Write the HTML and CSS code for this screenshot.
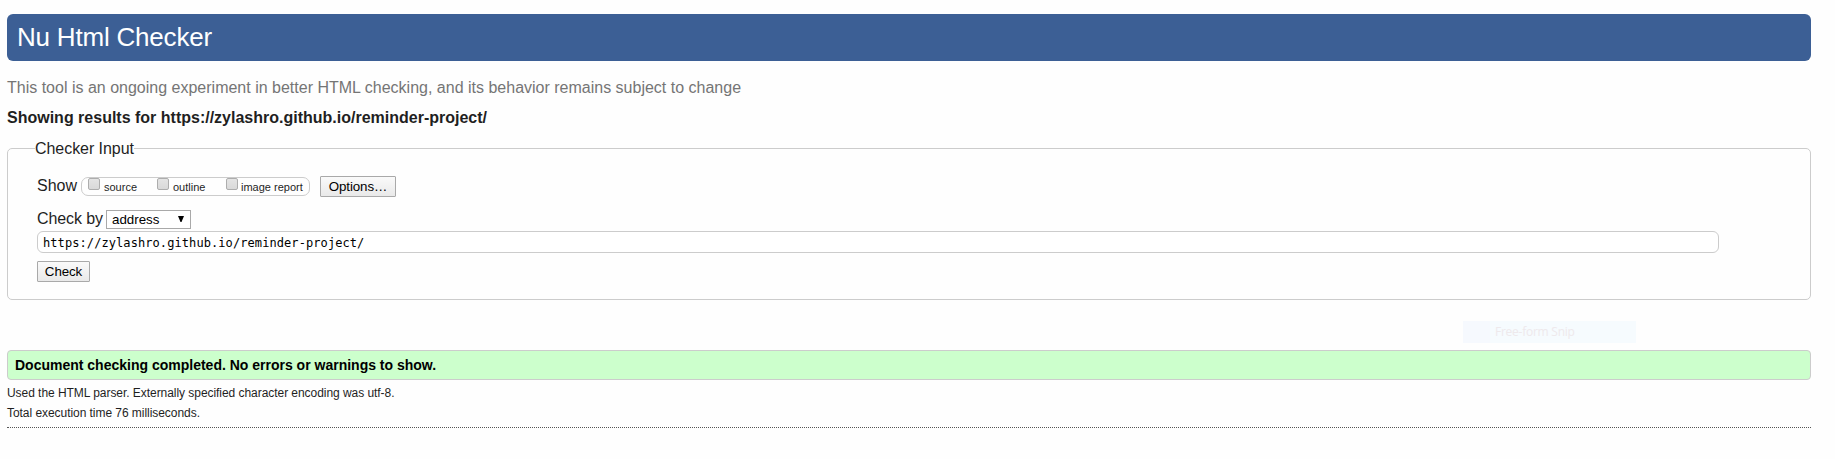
FILE: index.html
```html
<!DOCTYPE html>
<html lang="en">
<head>
<meta charset="utf-8">
<title>Nu Html Checker</title>
<link rel="stylesheet" href="styles.css">
</head>
<body>
<header class="banner"><h1 class="title"><span>Nu Html Checker</span></h1></header>
<p class="intro"><span>This tool is an ongoing experiment in better HTML checking, and its behavior remains subject to change</span></p>
<h2 class="showing"><span>Showing results for https://zylashro.github.io/reminder-project/</span></h2>
<form>
<fieldset class="panel">
<legend class="legend">Checker Input</legend>
<div class="show-row">
<span class="label">Show</span>
<span class="checks">
<label class="check"><input type="checkbox" class="box"><span>source</span></label>
<label class="check"><input type="checkbox" class="box"><span>outline</span></label>
<label class="check"><input type="checkbox" class="box"><span class="report">image report</span></label>
</span>
<button type="button" class="button options">Options…</button>
</div>
<div class="by-row">
<label class="by-label" for="by">Check by</label>
<button type="button" id="by" class="select"><span>address</span><svg class="arrow" width="6" height="6" viewBox="0 0 6 6"><path d="M0 0h6L3.5 6h-1z"/></svg></button>
</div>
<input class="url" type="text" value="https://zylashro.github.io/reminder-project/" aria-label="Address" spellcheck="false">
<button type="button" class="button submit">Check</button>
</fieldset>
</form>
<p class="success"><span>Document checking completed. No errors or warnings to show.</span></p>
<p class="detail"><span>Used the HTML parser. Externally specified character encoding was utf-8.</span></p>
<p class="detail timing"><span>Total execution time 76 milliseconds.</span></p>
<hr class="rule">
<div class="snip-menu"><span>Free-form Snip</span></div>
</body>
</html>
```
FILE: styles.css
```css
* { box-sizing: border-box; }
body {
  margin: 0;
  padding: 14px 24px 0 7px;
  background: #fefefe;
  color: #1f1f1f;
  font: 16px/20px "Liberation Sans", Arial, sans-serif;
  white-space: nowrap;
  overflow: hidden;
}
h1, h2, p { margin: 0; }
.banner {
  height: 47px;
  padding: 0 10px;
  border-radius: 6px;
  background: #3c5f95;
}
.title { font-size: 26px; font-weight: 400; line-height: 46px; letter-spacing: -0.2px; color: #fff; }
.intro { margin-top: 17px; color: #757575; }
.showing { margin-top: 10px; font-size: 16px; font-weight: 700; line-height: 20px; }
.panel {
  height: 162px;
  margin: 10px 0 0;
  padding: 18px 29px 0;
  border: 1px solid #ccc;
  border-radius: 5px;
}
.legend { height: 20px; margin-left: -2px; padding: 0; line-height: 22px; letter-spacing: -0.05px; }
.show-row { display: flex; height: 21px; }
.label { width: 44px; line-height: 19px; }
.checks {
  display: flex;
  width: 229px;
  height: 19px;
  margin-top: 1px;
  padding-left: 6px;
  border: 1px solid #ccc;
  border-radius: 7px;
}
.check { display: flex; width: 69px; font-size: 11px; line-height: 18px; }
.report { margin-left: -1px; }
.box {
  appearance: none;
  flex: none;
  width: 12px;
  height: 12px;
  margin: 0 4px 0 0;
  border: 1px solid #adadad;
  border-radius: 2px;
  background: linear-gradient(#e4e4e4, #d9d9d9);
}
.button {
  display: block;
  height: 21px;
  padding: 0;
  border: 1px solid #a9a9a9;
  border-radius: 1px;
  background: linear-gradient(#fafafa, #e9e9e9);
  color: #000;
  font: 13.33px/20px "Liberation Sans", Arial, sans-serif;
}
.options { width: 76px; margin-left: 10px; letter-spacing: -0.1px; }
.by-row { display: flex; height: 19px; margin-top: 13px; }
.by-label { width: 69px; line-height: 18px; letter-spacing: -0.1px; }
.select {
  display: flex;
  align-items: center;
  justify-content: space-between;
  width: 85px;
  height: 19px;
  padding: 0 6px 0 5px;
  border: 1px solid #a9a9a9;
  border-radius: 0;
  background: #fff;
  color: #000;
  font: 13.33px/17px "Liberation Sans", Arial, sans-serif;
}
.arrow { margin-top: -1px; }
.url {
  display: block;
  width: 1682px;
  height: 22px;
  margin: 2px 0 8px;
  padding: 2px 5px 0;
  border: 1px solid #ccc;
  border-radius: 6px;
  background: #fff;
  color: #000;
  font: 12px/18px "DejaVu Sans Mono", monospace;
  letter-spacing: 0.08px;
}
.submit { width: 53px; letter-spacing: -0.1px; }
.success {
  height: 30px;
  margin-top: 50px;
  padding-left: 7px;
  border: 1px solid #ccc;
  border-radius: 4px;
  background: #cfc;
  color: #000;
  font-size: 14px;
  font-weight: 700;
  line-height: 28px;
}
.detail { margin-top: 3px; font-size: 12px; letter-spacing: -0.05px; }
.timing { margin-top: 0; }
.rule { margin: 4px 0 0; border: 0; border-top: 1px dotted #555; }
.snip-menu {
  position: absolute;
  left: 1463px;
  top: 321px;
  width: 173px;
  height: 22px;
  padding-left: 32px;
  background: linear-gradient(90deg, #f6f9fe 27px, #f6fbfe 27px);
  color: #eee9ec;
  font: 12px/22px "Open Sans", sans-serif;
  letter-spacing: -0.25px;
}
```
